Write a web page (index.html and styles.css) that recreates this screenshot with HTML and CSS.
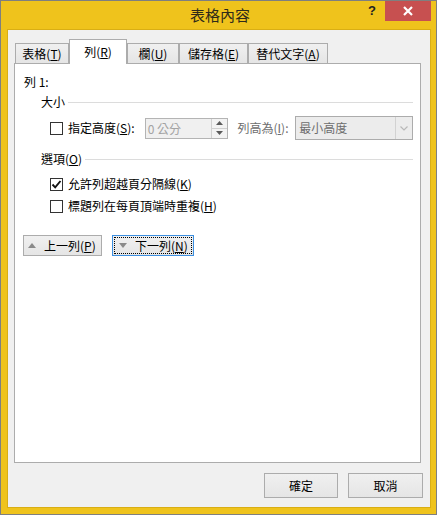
FILE: index.html
```html
<!DOCTYPE html>
<html lang="zh-Hant">
<head>
<meta charset="utf-8">
<title>表格內容</title>
<link rel="stylesheet" href="styles.css">
</head>
<body>
<div class="window">
  <div class="titlebar">
    <div class="tb-left"></div>
    <div class="title">表格內容</div>
    <div class="tb-right">
      <div class="help">?</div>
      <div class="close">
        <svg width="12" height="12" viewBox="0 0 12 12"><path d="M2 2 L10 10 M10 2 L2 10" stroke="#fff" stroke-width="2.2" fill="none"/></svg>
      </div>
    </div>
  </div>
  <div class="client">
    <div class="tabs">
      <div class="tab w1">表格(<u>T</u>)</div>
      <div class="tab w2 active">列(<u>R</u>)</div>
      <div class="tab w3">欄(<u>U</u>)</div>
      <div class="tab w4">儲存格(<u>E</u>)</div>
      <div class="tab w5">替代文字(<u>A</u>)</div>
    </div>
    <div class="panel">
      <div class="row-title">列 1:</div>
      <div class="group g1"><span class="g-label">大小</span><span class="rule"></span></div>
      <div class="size-row">
        <span class="cb"></span>
        <span class="lbl1">指定高度(<u>S</u>):</span>
        <div class="spin">
          <span class="spin-val">0 公分</span>
          <div class="spin-btns">
            <span class="sb"><svg width="7" height="4" viewBox="0 0 7 4"><path d="M0 4 L3.5 0 L7 4Z" fill="#5a5a5a"/></svg></span>
            <span class="sb"><svg width="7" height="4" viewBox="0 0 7 4"><path d="M0 0 L3.5 4 L7 0Z" fill="#5a5a5a"/></svg></span>
          </div>
        </div>
        <span class="lbl2">列高為(<u>I</u>):</span>
        <div class="select">
          <span class="sel-val">最小高度</span>
          <span class="drop"><svg width="8" height="5" viewBox="0 0 8 5"><path d="M0.5 0.5 L4 4 L7.5 0.5" stroke="#b8b8b8" stroke-width="1.2" fill="none"/></svg></span>
        </div>
      </div>
      <div class="group g2"><span class="g-label">選項(<u>O</u>)</span><span class="rule"></span></div>
      <div class="check-row">
        <span class="cb"><svg width="11" height="11" viewBox="0 0 11 11"><path d="M1.5 5.5 L4.2 8.3 L9.5 2" stroke="#111" stroke-width="1.9" fill="none"/></svg></span>
        <span class="ck-lbl">允許列超越頁分隔線(<u>K</u>)</span>
      </div>
      <div class="check-row">
        <span class="cb"></span>
        <span class="ck-lbl">標題列在每頁頂端時重複(<u>H</u>)</span>
      </div>
      <div class="nav-row">
        <button class="btn nav prev"><svg width="8" height="5" viewBox="0 0 8 5"><path d="M0 5 L4 0 L8 5Z" fill="#8a8a8a"/></svg><span>上一列(<u>P</u>)</span></button>
        <button class="btn nav next focus"><svg width="8" height="5" viewBox="0 0 8 5"><path d="M0 0 L4 5 L8 0Z" fill="#8a8a8a"/></svg><span>下一列(<u>N</u>)</span></button>
      </div>
    </div>
    <div class="footer">
      <button class="btn ok">確定</button>
      <button class="btn cancel">取消</button>
    </div>
  </div>
</div>
</body>
</html>
```

FILE: styles.css
```css
* { box-sizing: border-box; }
html, body { margin: 0; padding: 0; }
body {
  width: 437px;
  height: 515px;
  overflow: hidden;
  font-family: "Noto Sans CJK TC", "Noto Sans", sans-serif;
  font-size: 12px;
  color: #000;
}
u { text-decoration: underline; text-underline-offset: 1px; }

.window {
  width: 437px;
  height: 515px;
  border: 1px solid #7f7f7f;
  background: #efc31c;
  padding: 0 5px 6px 6px;
  display: flex;
  flex-direction: column;
}

.titlebar {
  height: 28px;
  flex: 0 0 28px;
  display: grid;
  grid-template-columns: 1fr auto 1fr;
  align-items: start;
}
.title {
  font-size: 15px;
  line-height: 28px;
  color: #2e2a1a;
  padding-left: 2px;
}
.tb-right {
  display: flex;
  justify-content: flex-end;
  align-items: flex-start;
}
.help {
  width: 26px;
  height: 20px;
  font-family: "Liberation Sans", sans-serif;
  font-weight: bold;
  font-size: 13px;
  line-height: 19px;
  text-align: center;
  color: #222;
}
.close {
  width: 46px;
  height: 20px;
  background: #c75050;
  display: flex;
  align-items: center;
  justify-content: center;
}

.client {
  flex: 1;
  border: 1px solid #d9ae14;
  background: #f0f0f0;
  padding: 9px 0 0 6px;
  display: flex;
  flex-direction: column;
}

.tabs {
  height: 24px;
  flex: 0 0 24px;
  display: flex;
  align-items: flex-end;
  margin-left: 1px;
}
.tab {
  height: 20px;
  border: 1px solid #acacac;
  border-bottom: none;
  background: linear-gradient(#f0f0f0, #e5e5e5);
  display: flex;
  align-items: center;
  justify-content: center;
  line-height: 16px;
  white-space: nowrap;
}
.tab.active {
  height: 25px;
  margin-bottom: -1px;
  background: #fff;
  position: relative;
  z-index: 1;
}
.w1 { width: 54px; }
.w2 { width: 58px; }
.w3 { width: 52px; }
.w4 { width: 69px; }
.w5 { width: 80px; }

.panel {
  flex: 0 0 400px;
  height: 400px;
  margin-right: 9px;
  border: 1px solid #acacac;
  background: #fff;
  padding: 10px 7px 0 9px;
  display: flex;
  flex-direction: column;
}

.row-title { line-height: 16px; height: 16px; }

.group {
  height: 16px;
  display: flex;
  align-items: center;
  padding-left: 17px;
  line-height: 16px;
}
.g1 { margin-top: 4px; }
.g2 { margin-top: 11px; }
.g-label { white-space: nowrap; margin-right: 3px; }
.rule { flex: 1; height: 1px; background: #dcdcdc; }

.size-row {
  margin-top: 6px;
  height: 24px;
  display: flex;
  align-items: center;
  padding-left: 26px;
}
.cb {
  width: 13px;
  height: 13px;
  flex: 0 0 13px;
  border: 1px solid #333;
  background: #fff;
  display: flex;
  align-items: center;
  justify-content: center;
  margin-right: 5px;
}
.lbl1 { width: 77px; white-space: nowrap; line-height: 16px; }
.spin {
  width: 83px;
  height: 21px;
  border: 1px solid #b4b4b4;
  background: #f0f0f0;
  display: flex;
  margin-right: 10px;
}
.spin-val {
  flex: 1;
  color: #a3a3a3;
  line-height: 19px;
  padding-left: 2px;
}
.spin-btns {
  width: 16px;
  border-left: 1px solid #d0d0d0;
  display: flex;
  flex-direction: column;
}
.sb {
  flex: 1;
  display: flex;
  align-items: center;
  justify-content: center;
  background: #f3f3f3;
}
.sb + .sb { border-top: 1px solid #d0d0d0; }
.lbl2 { width: 58px; white-space: nowrap; color: #6d6d6d; line-height: 16px; }
.select {
  width: 118px;
  height: 24px;
  border: 1px solid #acacac;
  background: #ececec;
  display: flex;
  align-items: stretch;
}
.sel-val {
  flex: 1;
  color: #6d6d6d;
  line-height: 22px;
  padding-left: 3px;
}
.drop {
  width: 17px;
  border-left: 1px solid #d2d2d2;
  display: flex;
  align-items: center;
  justify-content: center;
}

.check-row {
  height: 22px;
  display: flex;
  align-items: center;
  padding-left: 26px;
  line-height: 16px;
}
.g2 + .check-row { margin-top: 6px; }

.btn {
  font-family: inherit;
  font-size: 12px;
  color: #000;
  border: 1px solid #acacac;
  background: linear-gradient(#f0f0f0, #e5e5e5);
  padding: 0;
  margin: 0;
  line-height: 16px;
}
.nav-row {
  margin-top: 18px;
  margin-left: -1px;
  display: flex;
  gap: 10px;
}
.nav {
  height: 21px;
  display: flex;
  align-items: center;
}
.prev { width: 79px; padding-left: 4px; }
.prev svg { margin-right: 8px; }
.next { width: 82px; padding-left: 6px; }
.next svg { margin-right: 8px; }
.focus {
  border-color: #3c8fe0;
  outline: 1px dotted #000;
  outline-offset: -3px;
}

.footer {
  margin-top: 10px;
  display: flex;
  justify-content: flex-end;
  gap: 10px;
  padding-right: 7px;
}
.ok { width: 74px; height: 25px; }
.cancel { width: 75px; height: 25px; }
```
